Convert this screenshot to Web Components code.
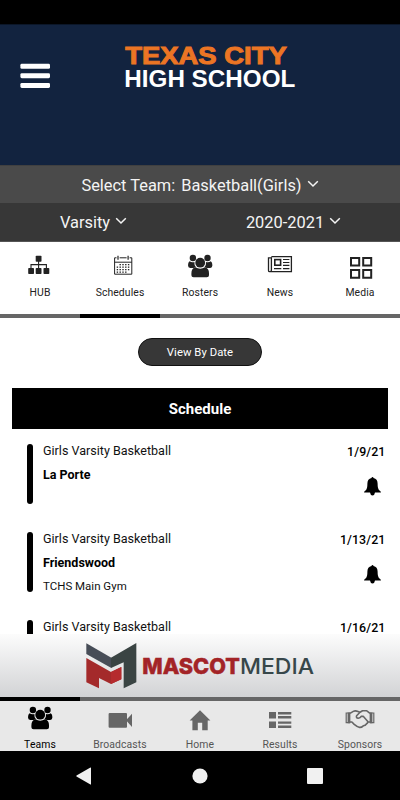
<!DOCTYPE html>
<html lang="en">
<head>
<meta charset="utf-8">
<meta name="viewport" content="width=device-width, initial-scale=1">
<title>Texas City High School</title>
<style>
  body {
    margin: 0;
    background: #fff;
    font-family: Roboto, "Liberation Sans", sans-serif;
  }
</style>
</head>
<body>
<school-app></school-app>

<script>
const PEOPLE = `
  <g transform="translate(3 2.7)">
    <circle cx="4.9" cy="3.3" r="3.2"/>
    <circle cx="19.5" cy="3.3" r="3.2"/>
    <path d="M1.6 6.6Q4 8 6.4 7.2Q6 10.6 8 12.6L5.4 13.4H2.2Q0 13 0 10.5Q0 7.6 1.6 6.6ZM22.8 6.6Q20.4 8 18 7.2Q18.4 10.6 16.4 12.6L19 13.4H22.2Q24.4 13 24.4 10.5Q24.4 7.6 22.8 6.6Z"/>
    <circle cx="12.2" cy="8" r="4.9"/>
    <path d="M7.4 12.6Q12.2 15.4 17 12.6Q21 13.8 21 18.5V20.6Q21 22.6 18.8 22.6H5.6Q3.4 22.6 3.4 20.6V18.5Q3.4 13.8 7.4 12.6Z"/>
  </g>`

let dots = ''
for (let row = 0; row < 4; row++) {
  for (let col = row === 0 ? 1 : 0; col < (row === 3 ? 4 : 5); col++) {
    dots += `<rect x="${11.7 + col * 2.8}" y="${10 + row * 2.5}" width="1.4" height="1.3"/>`
  }
}

const ICONS = {
  hub: {
    size: [30, 26],
    body: `<rect x="10.7" y="1.7" width="5.8" height="6" rx=".8"/>
      <path d="M13.6 7V14.5M6 14.5V10.6H21.4V14.5" fill="none" stroke="currentColor" stroke-width="1.1"/>
      <rect x="3.2" y="14" width="5.8" height="6" rx=".8"/>
      <rect x="10.7" y="14" width="5.8" height="6" rx=".8"/>
      <rect x="18.5" y="14" width="5.8" height="6" rx=".8"/>`
  },
  calendar: {
    size: [30, 26],
    body: `<path d="M11.5 3.8H9.6V20.2H26.8V3.8H24.6M14.6 3.8H21.6M9.6 8.2H26.8" fill="none" stroke="currentColor" stroke-width="1"/>
      <path d="M13 1.8V5.8M23.1 1.8V5.8" stroke="currentColor" stroke-width="1.2"/>${dots}`
  },
  people: {
    size: [30, 28],
    body: PEOPLE
  },
  news: {
    size: [30, 26],
    body: `<path d="M6.4 2.6H26.4V17.6H4.6Q3.5 17.6 3.5 16.4V3.8H6.4V16.4Q6.2 17.6 5 17.6" fill="none" stroke="currentColor" stroke-width="1.3"/>
      <rect x="9.8" y="5.6" width="5.8" height="5.6" fill="none" stroke="currentColor" stroke-width="1.6"/>
      <path d="M18 5.5H24.4M18 8.5H24.4M18 11.3H24.4M9 14.6H16.3M18 14.6H24.4" stroke="currentColor" stroke-width="1.2"/>`
  },
  grid: {
    size: [30, 26],
    body: `<path d="M6 4H14.2V11.6H6ZM18.2 4H26.2V11.6H18.2ZM6 15.9H14.2V23.8H6ZM18.2 15.9H26.2V23.8H18.2Z" fill="none" stroke="currentColor" stroke-width="2"/>`
  },
  camera: {
    size: [30, 28],
    body: `<rect x="3.6" y="9" width="18.4" height="14.8" rx="1"/><path d="M21 16.3L27 9.8V23Z"/>`
  },
  home: {
    size: [30, 28],
    body: `<path d="M15 6.2L25.4 16.6H22.7V26.2H17.2V18.8H12.8V26.2H7.4V16.6H4.6Z"/>`
  },
  results: {
    size: [30, 28],
    body: `<path d="M4 8H11V14.4H4ZM4 17.4H11V24H4ZM13 8H26.3V10.4H13ZM13 12H26.3V14.4H13ZM13 17.4H26.3V19.8H13ZM13 21.5H26.3V24H13Z"/>`
  },
  handshake: {
    size: [30, 28],
    body: `<path d="M1.2 9H4.6V18.6H1.2ZM28.8 9H25.4V18.6H28.8Z" fill="none" stroke="currentColor" stroke-width="1.2"/>
      <path d="M2.6 8.4H5.2V19.2H2.6ZM27.4 8.4H24.8V19.2H27.4Z"/>
      <path d="M5 9.4L8.3 7.4Q10.2 6.3 13 7.4L15 8.2L17.5 6.7H21.5L25 9.4M15 8.2L11.6 11.8Q10.8 14 13.2 14.2Q15.4 14 16.2 12.4L18.2 12.2L22.6 17.2Q23.4 18.8 21.6 19.8Q20.4 21.6 18.3 21.8Q16.4 23.6 14.6 23.4Q12.6 23.2 9.2 20.4L6.9 18H5M25 18H23" fill="none" stroke="currentColor" stroke-width="1.6" stroke-linejoin="round"/>`
  },
  bell: {
    size: [17, 19],
    body: `<path d="M8.5 0Q9.4 0 9.5 1.1Q13.6 2 13.6 6.6Q13.6 11.4 14.9 12.9Q17 14.2 17 15.6H0Q0 14.2 2.1 12.9Q3.4 11.4 3.4 6.6Q3.4 2 7.5 1.1Q7.6 0 8.5 0ZM6 15.5H11Q10.6 18.4 8.5 18.4Q6.4 18.4 6 15.5Z"/>`
  },
  chevron: {
    size: [12, 8],
    body: `<path d="M1.2 1.2L6 6L10.8 1.2" fill="none" stroke="currentColor" stroke-width="1.5"/>`
  },
  menu: {
    size: [30, 26],
    body: `<rect x=".4" y=".8" width="29.6" height="5" rx="1.4"/><rect x=".4" y="10.2" width="29.6" height="5" rx="1.4"/><rect x=".4" y="19.9" width="29.6" height="5" rx="1.4"/>`
  },
  back: {
    size: [15, 18],
    body: `<path d="M15 .6V17.4Q14.6 17.6 14 17.2L.5 9.6Q0 9 .5 8.4L14 .8Z"/>`
  },
  circle: {
    size: [16, 16],
    body: `<circle cx="8" cy="8" r="7.6"/>`
  },
  square: {
    size: [16, 16],
    body: `<rect width="16" height="16" rx="1"/>`
  }
}

/**
 * Inline icon, picked by its name attribute.
 */
customElements.define('app-icon',
  class extends HTMLElement {
    connectedCallback () {
      const icon = ICONS[this.getAttribute('name')]
      const [width, height] = icon.size
      this.attachShadow({ mode: 'open' }).innerHTML = `
        <style>
          :host { display: block; flex: none; }
          svg { display: block; }
        </style>
        <svg width="${width}" height="${height}" viewBox="0 0 ${width} ${height}" fill="currentColor">${icon.body}</svg>`
    }
  })

/**
 * Creates a custom element with static markup.
 */
function defineStatic (name, html) {
  const template = document.createElement('template')
  template.innerHTML = html
  customElements.define(name,
    class extends HTMLElement {
      constructor () {
        super()
        this.attachShadow({ mode: 'open' })
          .appendChild(template.content.cloneNode(true))
      }
    })
}

defineStatic('school-header', `
<style>
  :host {
    display: flex;
    height: 141px;
    box-sizing: border-box;
    padding: 17px 0 0 20px;
    border-top: 1px solid #0b1628;
    background: #12233f;
    color: #fff;
  }
  app-icon { margin-top: 21px; }
  .name { display: block; margin-left: 71px; }
  text { font-family: "Liberation Sans", sans-serif; font-weight: 700; }
</style>
<app-icon name="menu"></app-icon>
<svg class="name" width="180" height="52" viewBox="121 42 180 52">
  <text x="125.2" y="63.5" font-size="24.6" textLength="161.5" lengthAdjust="spacingAndGlyphs" fill="#ec7524" stroke="#ec7524" stroke-width="1">TEXAS CITY</text>
  <text x="124.3" y="86.8" font-size="24.4" textLength="171" lengthAdjust="spacingAndGlyphs" fill="#fff">HIGH SCHOOL</text>
</svg>
`)

defineStatic('select-box', `
<style>
  :host {
    display: flex;
    align-items: center;
    justify-content: center;
    gap: 5px;
    flex: 1;
    color: #f4f4f4;
    font-size: 16.4px;
    line-height: 20px;
    white-space: nowrap;
  }
  .value { padding-top: 2px; }
  app-icon { margin-top: -2px; }
</style>
<span class="value"><slot></slot></span>
<app-icon name="chevron"></app-icon>
`)

defineStatic('nav-tab', `
<style>
  :host {
    display: flex;
    flex-direction: column;
    align-items: center;
    flex: 1 1 0;
    min-width: 0;
    box-sizing: border-box;
    padding-top: var(--tab-top);
    color: var(--tab-color);
    font-size: 10.4px;
    line-height: 14px;
    border-top: var(--tab-line-top, 0) solid #666;
    border-bottom: var(--tab-line-bottom, 0) solid #666;
  }
  :host([active]) {
    border-color: #000;
    color: var(--tab-active, #000);
  }
  .label { margin-top: var(--tab-gap); letter-spacing: .1px; }
</style>
<slot name="icon"></slot>
<span class="label"><slot></slot></span>
`)

defineStatic('pill-button', `
<style>
  :host {
    display: flex;
    align-items: center;
    justify-content: center;
    flex: none;
    width: 124px;
    height: 28px;
    box-sizing: border-box;
    border: 1px solid #111;
    border-radius: 14px;
    background: #373737;
    color: #fff;
    font-size: 11.3px;
    letter-spacing: .05px;
  }
</style>
<span><slot></slot></span>
`)

defineStatic('game-row', `
<style>
  :host {
    display: flex;
    height: 60.5px;
    margin-bottom: 27.8px;
    color: #111;
  }
  .bar { width: 6px; border-radius: 3px; background: #000; }
  .info { flex: 1; margin: -1px 0 0 10.5px; font-size: 12.55px; }
  .info div { line-height: 15px; }
  .info .opponent { margin-top: 9px; height: 15px; font-weight: 700; font-size: 12.5px; color: #000; }
  .info .place { margin-top: 9px; font-size: 11.5px; }
  .side { display: flex; flex-direction: column; align-items: flex-end; }
  .date { margin-top: .4px; font-size: 12.4px; line-height: 15px; font-weight: 500; letter-spacing: .1px; color: #000; }
  app-icon { margin: 18px 5px 0 0; color: #000; }
</style>
<div class="bar"></div>
<div class="info">
  <div class="team"><slot></slot></div>
  <div class="opponent"><slot name="opponent"></slot></div>
  <div class="place"><slot name="place"></slot></div>
</div>
<div class="side">
  <div class="date"><slot name="date"></slot></div>
  <app-icon name="bell"></app-icon>
</div>
`)

defineStatic('sponsor-banner', `
<style>
  :host {
    display: flex;
    height: 63px;
    box-sizing: border-box;
    padding: 9px 0 0 86px;
    background: linear-gradient(#fcfcfc, #d2d3d5);
  }
  svg { display: block; flex: none; }
  .word { margin-left: 1.5px; }
  text { font-family: Inter, sans-serif; font-size: 21.8px; }
</style>
<svg width="50.5" height="46" viewBox="78 100 151.5 138">
  <path d="M79 101L154 144V175L79 133Z" fill="#474d57"/>
  <path d="M153 144L229 100V218L191 236V158L153 175Z" fill="#3a4443"/>
  <path d="M79 145L153 187L184 172V209L153 223L117 205V236L79 218Z" fill="#a42a2b"/>
  <path d="M153 187L184 172V209L153 223Z" fill="#b52b2e"/>
</svg>
<svg class="word" width="180" height="46" viewBox="138 643 180 46">
  <text x="142.3" y="674" textLength="97.5" lengthAdjust="spacingAndGlyphs" font-weight="800" fill="#a32427" stroke="#a32427" stroke-width=".5">MASCOT</text>
  <text x="240" y="674" textLength="74" lengthAdjust="spacingAndGlyphs" font-weight="500" fill="#37474a">MEDIA</text>
</svg>
`)

defineStatic('system-bar', `
<style>
  :host {
    display: flex;
    align-items: center;
    height: 49px;
    padding-left: 76px;
    background: #000;
    color: #f1f1f1;
  }
  .home { margin-left: 101px; }
  .recent { margin-left: 99px; }
</style>
<app-icon name="back"></app-icon>
<app-icon class="home" name="circle"></app-icon>
<app-icon class="recent" name="square"></app-icon>
`)

defineStatic('school-app', `
<style>
  :host {
    display: flex;
    flex-direction: column;
    width: 400px;
    height: 800px;
    overflow: hidden;
  }
  .status { height: 24px; background: #000; }
  .row { display: flex; box-sizing: border-box; }
  .team { height: 38px; background: #4a4a4a; border-top: 1px solid #404040; }
  .gap { margin-right: 2px; }
  .level { height: 39px; background: #373737; border-bottom: 1px solid #555; }
  .level select-box:first-child { flex: 0 0 187px; }
  .tabs {
    display: flex;
    height: 76px;
    --tab-top: 12px;
    --tab-gap: 6px;
    --tab-color: #222;
    --tab-active: #222;
    --tab-line-bottom: 4px;
  }
  main {
    display: flex;
    flex-direction: column;
    height: 316px;
    overflow: hidden;
  }
  pill-button { margin: 20px auto 0; }
  h2 {
    margin: 22px 12px 0;
    height: 41px;
    flex: none;
    background: #000;
    color: #fff;
    font-size: 15px;
    line-height: 43px;
    text-align: center;
  }
  .games { padding: 14.5px 14.5px 0 26.5px; }
  .bottom {
    display: flex;
    height: 54px;
    background: #e8e8e8;
    --tab-top: 3px;
    --tab-gap: 6px;
    --tab-color: #555;
    --tab-line-top: 4px;
  }
  .bottom app-icon { color: #666; }
  .bottom [active] app-icon { color: #000; }
  nav-tab { white-space: nowrap; }
</style>
<div class="status"></div>
<school-header></school-header>
<div class="row team"><select-box><span class="gap">Select Team: </span>Basketball(Girls)</select-box></div>
<div class="row level"><select-box>Varsity</select-box><select-box>2020-2021</select-box></div>
<nav class="tabs">
  <nav-tab><app-icon slot="icon" name="hub"></app-icon>HUB</nav-tab>
  <nav-tab active><app-icon slot="icon" name="calendar"></app-icon>Schedules</nav-tab>
  <nav-tab><app-icon slot="icon" name="people" style="margin: -2px 0 0"></app-icon>Rosters</nav-tab>
  <nav-tab><app-icon slot="icon" name="news"></app-icon>News</nav-tab>
  <nav-tab><app-icon slot="icon" name="grid"></app-icon>Media</nav-tab>
</nav>
<main>
  <pill-button>View By Date</pill-button>
  <h2>Schedule</h2>
  <div class="games">
    <game-row>Girls Varsity Basketball<span slot="opponent">La Porte</span><span slot="date">1/9/21</span></game-row>
    <game-row>Girls Varsity Basketball<span slot="opponent">Friendswood</span><span slot="place">TCHS Main Gym</span><span slot="date">1/13/21</span></game-row>
    <game-row>Girls Varsity Basketball<span slot="date">1/16/21</span></game-row>
  </div>
</main>
<sponsor-banner></sponsor-banner>
<nav class="bottom">
  <nav-tab active><app-icon slot="icon" name="people"></app-icon>Teams</nav-tab>
  <nav-tab><app-icon slot="icon" name="camera"></app-icon>Broadcasts</nav-tab>
  <nav-tab><app-icon slot="icon" name="home"></app-icon>Home</nav-tab>
  <nav-tab><app-icon slot="icon" name="results"></app-icon>Results</nav-tab>
  <nav-tab><app-icon slot="icon" name="handshake"></app-icon>Sponsors</nav-tab>
</nav>
<system-bar></system-bar>
`)
</script>
</body>
</html>
